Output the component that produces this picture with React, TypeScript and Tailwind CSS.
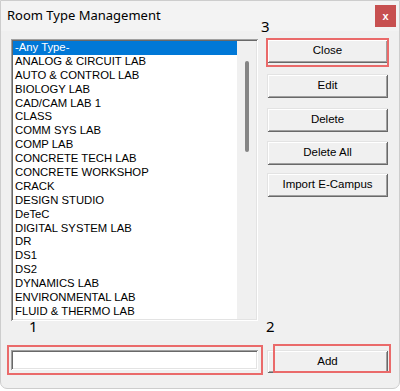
const roomTypes = [
  "-Any Type-",
  "ANALOG & CIRCUIT LAB",
  "AUTO & CONTROL LAB",
  "BIOLOGY LAB",
  "CAD/CAM LAB 1",
  "CLASS",
  "COMM SYS LAB",
  "COMP LAB",
  "CONCRETE TECH LAB",
  "CONCRETE WORKSHOP",
  "CRACK",
  "DESIGN STUDIO",
  "DeTeC",
  "DIGITAL SYSTEM LAB",
  "DR",
  "DS1",
  "DS2",
  "DYNAMICS LAB",
  "ENVIRONMENTAL LAB",
  "FLUID & THERMO LAB",
];

const sunken =
  "shadow-[inset_1px_1px_#a0a0a0,inset_-1px_-1px_#ffffff,inset_2px_2px_#696969,inset_-2px_-2px_#e3e3e3]";
const raised =
  "shadow-[inset_1px_1px_#e3e3e3,inset_-1px_-1px_#696969,inset_2px_2px_#ffffff,inset_-2px_-2px_#a0a0a0]";

function Btn({ label, className = "" }: { label: string; className?: string }) {
  return (
    <button
      className={`w-[121px] h-[24px] bg-[#f0f0f0] ${raised} flex items-center justify-center text-[11.5px] text-black ${className}`}
    >
      {label}
    </button>
  );
}

function ListBox() {
  return (
    <div className={`w-[247px] h-[282px] bg-white ${sunken} p-[2px] flex`}>
      <ul className="flex-1">
        {roomTypes.map((t, i) => (
          <li
            key={t}
            className={`h-[13.9px] leading-[13.9px] pl-[2px] text-[11.3px] whitespace-nowrap ${
              i === 0 ? "bg-[#0078d7] text-white" : "text-black"
            }`}
          >
            {t}
          </li>
        ))}
      </ul>
      <div className="w-[19px] bg-[#f0f0f0] pt-[20px] pl-[8px]">
        <div className="w-[4px] h-[91px] rounded-full bg-[#858585]" />
      </div>
    </div>
  );
}

export default function App() {
  return (
    <div className="relative w-[400px] h-[391px] bg-white font-['Liberation_Sans',Arial,sans-serif]">
      <div className="w-[400px] h-[389px] border border-[#cdcdcd] rounded-b-[7px] bg-[#f0f0f0] overflow-hidden">
        <div className="h-[30px] bg-[#f3f3f3] flex items-center justify-between pl-[6px] pr-[3px]">
          <span className="font-['Noto_Sans',sans-serif] text-[13px] text-black">Room Type Management</span>
          <div className="w-[21px] h-[22px] bg-[#c75050] flex items-center justify-center text-white text-[11px] font-bold leading-none">
            x
          </div>
        </div>

        <div className="pl-[10px] pt-[8px]">
          <div className="flex">
            <ListBox />
            <div className="ml-[9px] flex flex-col">
              <Btn label="Close" />
              <Btn label="Edit" className="mt-[11px]" />
              <Btn label="Delete" className="mt-[10px]" />
              <Btn label="Delete All" className="mt-[9px]" />
              <Btn label="Import E-Campus" className="mt-[8px]" />
            </div>
          </div>

          <div className="flex items-start mt-[29px]">
            <div className={`w-[247px] h-[20px] bg-white ${sunken}`} />
            <Btn label="Add" className="ml-[9px] !h-[23px]" />
          </div>
        </div>
      </div>

      {/* annotation overlay */}
      <div className="absolute left-[266px] top-[38px] w-[123px] h-[29px] border-2 border-[#ea6a6a]" />
      <div className="absolute left-[7px] top-[345px] w-[256px] h-[30px] border-2 border-[#ea6a6a]" />
      <div className="absolute left-[273px] top-[344px] w-[118px] h-[29px] border-2 border-[#ea6a6a]" />
      <span className="absolute left-[261px] top-[19px] font-['Noto_Sans',sans-serif] text-[15px] leading-none text-black">3</span>
      <span className="absolute left-[29px] top-[319px] font-['Noto_Sans',sans-serif] text-[15px] leading-none text-black">1</span>
      <span className="absolute left-[266px] top-[319px] font-['Noto_Sans',sans-serif] text-[15px] leading-none text-black">2</span>
    </div>
  );
}
